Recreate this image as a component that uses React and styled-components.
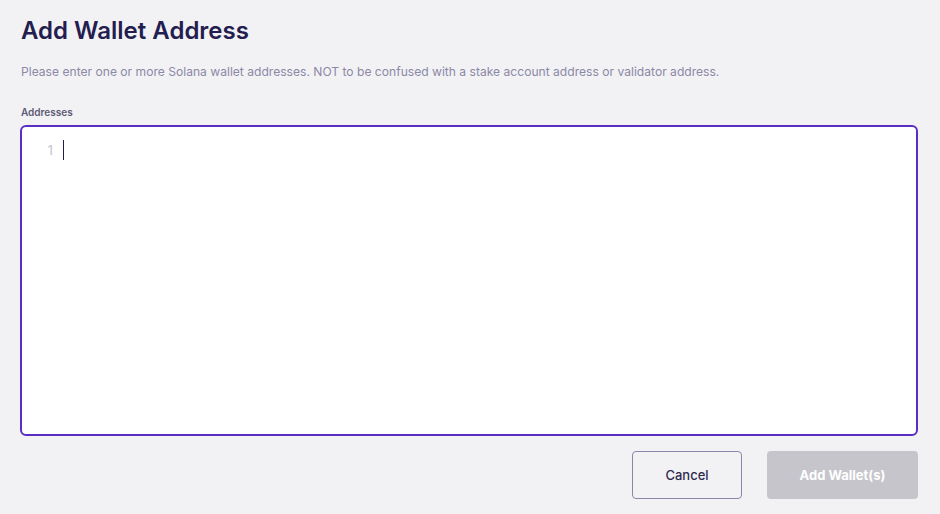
import React from 'react';
import styled, { createGlobalStyle } from 'styled-components';

const Global = createGlobalStyle`
  html, body { margin: 0; padding: 0; background: #f2f2f5; }
  body { font-family: Inter, "Noto Sans", sans-serif; }
`

const Page = styled.div`
  padding: 15px 22px 0 20px;
  display: flex;
  flex-direction: column;
`

const Title = styled.h1`
  margin: 0 0 0 1px;
  font-size: 24px;
  font-weight: 600;
  color: #241d4f;
  line-height: 32px;
`

const Description = styled.p`
  margin: 17px 0 0 1px;
  font-size: 12.1px;
  color: #8c88a5;
  line-height: 16px;
`

const Label = styled.label`
  margin: 25px 0 0 1px;
  font-size: 10px;
  font-weight: 600;
  color: #5d5974;
  line-height: 14px;
`

const Editor = styled.div`
  margin-top: 6px;
  height: 311px;
  box-sizing: border-box;
  background: #fff;
  border: 2px solid #5a2ec3;
  border-radius: 6px;
  display: flex;
  padding-top: 13px;
`

const Gutter = styled.div`
  width: 31px;
  text-align: right;
  font-size: 13px;
  font-weight: 500;
  color: #cbcad3;
  line-height: 20px;
`

const Line = styled.div`
  margin-left: 10px;
  height: 20px;
  display: flex;
  align-items: center;
`

const Caret = styled.span`
  width: 1px;
  height: 20px;
  background: #241d4f;
`

const Actions = styled.div`
  display: flex;
  justify-content: flex-end;
  gap: 25px;
  margin-top: 15px;
`

const Button = styled.button`
  height: 48px;
  width: ${p => p.$w}px;
  border-radius: 4px;
  font-family: Inter, "Noto Sans", sans-serif;
  font-size: 13px;
  font-weight: ${p => (p.$primary ? 700 : 500)};
  color: ${p => (p.$primary ? '#fff' : '#2e2a4d')};
  background: ${p => (p.$primary ? '#c6c5cc' : 'transparent')};
  border: ${p => (p.$primary ? 'none' : '1px solid #8a86a8')};
  cursor: pointer;
`

export default function App() {
  return (
    <>
      <Global />
      <Page>
        <Title>Add Wallet Address</Title>
        <Description>
          Please enter one or more Solana wallet addresses. NOT to be confused with a stake account address or validator address.
        </Description>
        <Label>Addresses</Label>
        <Editor>
          <Gutter>1</Gutter>
          <Line><Caret /></Line>
        </Editor>
        <Actions>
          <Button $w={110}>Cancel</Button>
          <Button $w={151} $primary disabled>Add Wallet(s)</Button>
        </Actions>
      </Page>
    </>
  );
}
